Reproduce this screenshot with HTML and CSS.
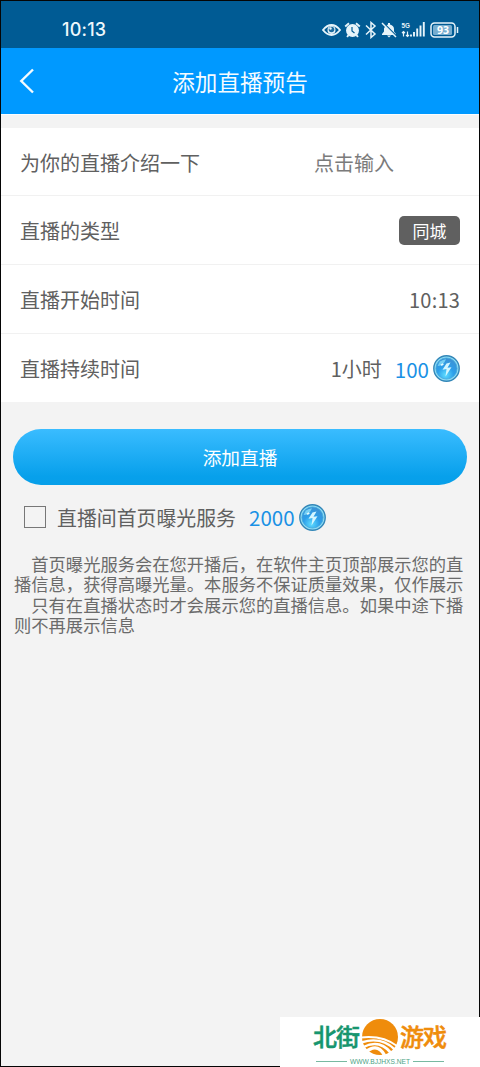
FILE: index.html
```html
<!DOCTYPE html>
<html lang="zh-CN">
<head>
<meta charset="utf-8">
<title>添加直播预告</title>
<link rel="stylesheet" href="styles.css">
</head>
<body>
<svg class="defs" width="0" height="0" aria-hidden="true">
  <defs>
    <radialGradient id="coin-fill" cx="0.45" cy="0.8" r="0.85">
      <stop offset="0" stop-color="#5edcff"/>
      <stop offset="0.45" stop-color="#2c9fea"/>
      <stop offset="1" stop-color="#3f8fd0"/>
    </radialGradient>
    <symbol id="coin" viewBox="0 0 27 27">
      <circle cx="13.5" cy="13.5" r="12.7" fill="#8fdcf5" stroke="#3387b8" stroke-width="1.4"/>
      <circle cx="13.5" cy="13.5" r="10.6" fill="url(#coin-fill)" stroke="#43a9dd" stroke-width="0.8"/>
      <path d="M4.600 11Q6 5 13 4.200L11 8L8 10.500Z" fill="#8ce3fb" opacity=".75"/>
      <path d="M13.500 8.500L9.500 14.800L13.500 14L12.500 21.500L18.500 12.300L14.500 12.800L17.500 7.500Z" fill="#d4f6ff"/>
      <path d="M7.500 9.500l2.300-1.200 1 1.300-2.100 1.500z" fill="#e5fbff"/>
    </symbol>
  </defs>
</svg>
<div class="phone">
  <header class="status">
    <span class="clock">10:13</span>
    <div class="status-icons">
      <svg width="19" height="14" viewBox="0 0 19 14"><path d="M1 7Q5 2 9.500 2T18 7Q14 12 9.500 12T1 7Z" fill="none" stroke="#e6f4fa" stroke-width="1.900"/><circle cx="9.500" cy="7" r="4" fill="#e6f4fa"/><circle cx="9.500" cy="6.500" r="2.800" fill="#1d6b9e"/><circle cx="8.500" cy="5.500" r="1.200" fill="#e6f4fa"/></svg>
      <svg class="icon" width="17" height="16" viewBox="0 0 16 16"><circle cx="8" cy="8.500" r="6.500" fill="#e6f4fa"/><path d="M.7 4.500L4.500 1.200M11.500 1.200L15.300 4.500M4 13L2.600 15M12 13L13.400 15" stroke="#e6f4fa" stroke-width="1.900"/><path d="M7.500 5V9L10 11" fill="none" stroke="#005b94" stroke-width="1.200"/></svg>
      <svg class="icon" width="12" height="18" viewBox="0 0 12 18"><path d="M1 4.500L10 13L6 16.500V1.500L10 5L1 13.500" fill="none" stroke="#e6f4fa" stroke-width="1.500"/></svg>
      <svg class="icon" width="16" height="16" viewBox="0 0 16 16"><path d="M1 13V12L3 9.500V6.500Q4 3.200 7 2.500V1H9V2.500Q13 3.500 13 7V9.500L15 12V13ZM6 13.500H10L8 15.600Z" fill="#e6f4fa"/><path d="M2.500 1L16 14.500" stroke="#005b94" stroke-width="1.500"/><path d="M1 1L15 15" stroke="#e6f4fa" stroke-width="1.500"/></svg>
      <svg class="icon" width="25" height="17" viewBox="0 0 25 17"><text class="network" x="0.500" y="7" textLength="8.500" lengthAdjust="spacingAndGlyphs">5G</text><path d="M2.500 15.500V10.500M1 12L2.500 10.500L4 12M6.500 10.500V15.500M5 14L6.500 15.500L8 14" fill="none" stroke="#e6f4fa" stroke-width="1.200"/><path d="M10 15.500V13.500M13 15.500V11M16.200 15.500V7.500M19.500 15.500V4.500M22.800 15.500V1" stroke="#e6f4fa" stroke-width="1.900"/></svg>
      <svg class="icon" width="29" height="16" viewBox="0 0 29 16"><rect x="1" y="1" width="24" height="14" rx="3.500" fill="none" stroke="#e6f4fa" stroke-width="1.500"/><rect x="3" y="3" width="19" height="10" rx="1.500" fill="#76adcf"/><path d="M27.500 5V11" stroke="#e6f4fa" stroke-width="1.500"/><text class="charge" x="7" y="12" textLength="12">93</text></svg>
    </div>
  </header>
  <nav class="navbar">
    <svg width="16" height="26" viewBox="0 0 16 26"><path d="M14 1.500L2.300 13L14 24.500" fill="none" stroke="#f4fbff" stroke-width="2.400"/></svg>
    <h1>添加直播预告</h1>
  </nav>
  <main>
    <section class="form">
      <div class="row"><span>为你的直播介绍一下</span><span class="placeholder">点击输入</span></div>
      <div class="row"><span>直播的类型</span><span class="tag">同城</span></div>
      <div class="row"><span>直播开始时间</span><span class="time">10:13</span></div>
      <div class="row"><span>直播持续时间</span><span class="cost"><span class="duration">1小时</span><span class="price">100</span><svg class="coin"><use href="#coin"/></svg></span></div>
    </section>
    <button class="submit">添加直播</button>
    <div class="service"><span class="checkbox"></span><span class="service-name">直播间首页曝光服务</span><span class="price">2000</span><svg class="coin"><use href="#coin"/></svg></div>
    <div class="notes">
      <p>首页曝光服务会在您开播后，在软件主页顶部展示您的直<br>播信息，获得高曝光量。本服务不保证质量效果，仅作展示</p>
      <p>只有在直播状态时才会展示您的直播信息。如果中途下播<br>则不再展示信息</p>
    </div>
  </main>
</div>
<aside class="watermark">
  <svg width="200" height="50" viewBox="0 0 200 50">
    <text class="brand green" x="33" y="29" textLength="47">北街</text>
    <circle cx="100" cy="20" r="18" fill="#ef8c0c"/>
    <path d="M81 19.500Q103 17 118 28.500L117 30Q102 19 81 21.500ZM82 24Q102 18.500 115.500 31.500L114 33.500Q101 20.500 82 26.500ZM83 29Q100 20.500 112 35L110 37Q99 23 83 31.500ZM85 33.500Q98 23.500 106 37.500L103 39Q97 27 86 37Z" fill="#fff"/>
    <text class="brand orange" x="120" y="29" textLength="47">游戏</text>
    <path d="M36 44.500H67M133 44.500H164" stroke="#78b9a1"/>
    <text class="site" x="70" y="47" textLength="60" lengthAdjust="spacingAndGlyphs">WWW.BJJHXS.NET</text>
  </svg>
</aside>
</body>
</html>
```
FILE: styles.css
```css
* { box-sizing: border-box; }
body { margin: 0; font-family: "Noto Sans CJK SC", sans-serif; color: #606060; background: #f3f3f3; }
svg { display: block; flex: none; }
.defs { position: absolute; }
.phone { height: 1067px; border: 1px solid #050505; background: #f3f3f3; }
.status { height: 47px; padding: 10px 20px 0 61px; display: flex; align-items: center; justify-content: space-between; background: #005b94; color: #eef8fc; }
.clock { font: 500 18px/24px Inter, sans-serif; padding-top: 1px; letter-spacing: 0.2px; }
.status-icons { display: flex; align-items: center; }
.icon { margin-left: 4px; }
.icon:nth-child(2) { margin-left: 3px; }
.network { font: 700 7.5px "Liberation Sans", sans-serif; fill: #e6f4fa; }
.charge { font: 700 10.5px "Noto Sans", sans-serif; fill: #fff; }
.navbar { height: 67px; padding: 0 18px; display: grid; grid-template-columns: 16px 1fr 16px; align-items: center; background: #0099ff; border-bottom: 1px solid #fafdff; }
h1 { margin: 2px 0 0; text-align: center; font-size: 22.6px; line-height: 30px; font-weight: 400; color: #f5fbff; }
.form { margin-top: 13px; background: #fff; }
.row { height: 69px; padding: 2px 19px 0; display: flex; align-items: center; justify-content: space-between; border-bottom: 1px solid #f1f1f1; font-size: 20px; line-height: 28px; }
.row:first-child { height: 68px; }
.row:last-child { border-bottom: 0; padding-top: 1px; height: 68px; }
.placeholder { width: 146px; color: #7b7b7b; }
.tag { width: 61px; height: 29px; margin-top: -2px; border-radius: 5px; background: #606060; color: #fff; text-align: center; font-size: 17px; line-height: 30px; }
.time { font: 400 20px/28px "Noto Sans CJK SC", sans-serif; letter-spacing: 0.2px; }
.cost { display: flex; align-items: center; }
.price { color: #1991e5; font-size: 20.5px; }
.duration { margin-right: 13px; }
.coin { width: 27px; height: 27px; margin-left: 4px; }
.submit { display: block; width: 454px; height: 56px; margin: 27px 0 0 12px; padding: 0; border: 0; border-radius: 28px; background: linear-gradient(#3abcff, #07a0eb 85%, #079fe9); color: #fff; font: 400 18.7px/56px "Noto Sans CJK SC", sans-serif; }
.service { height: 64px; padding-left: 23px; display: flex; align-items: center; font-size: 19.9px; line-height: 28px; }
.checkbox { width: 22px; height: 22px; border: 1px solid #777; }
.service-name { margin: 1px 13px 0 11px; }
.notes { padding-left: 13px; margin-top: 5px; font-size: 17.3px; line-height: 20.4px; white-space: nowrap; color: #6b6b6b; }
.notes p { margin: 0; text-indent: 17.3px; }
.watermark { position: absolute; left: 280px; top: 1017px; width: 200px; height: 50px; background: #fff; }
.brand { font: 500 24px "Noto Sans CJK SC", sans-serif; stroke-width: 0.5px; }
.green { fill: #16956e; stroke: #16956e; }
.orange { fill: #ef8c0c; stroke: #ef8c0c; }
.site { font: 6.5px "Liberation Sans", sans-serif; fill: #4ca385; }
```
